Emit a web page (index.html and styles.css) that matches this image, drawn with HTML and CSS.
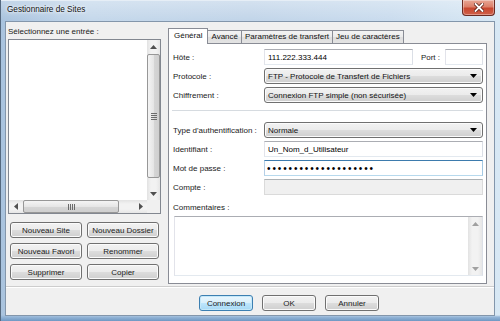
FILE: index.html
```html
<!DOCTYPE html>
<html lang="fr">
<head>
  <meta charset="UTF-8">
  <title>Gestionnaire de Sites</title>
  <link rel="stylesheet" href="styles.css">
</head>
<body>

<div class="window">

  <!-- TITLE BAR -->
  <div class="titlebar">
    <span class="title">Gestionnaire de Sites</span>
    <button class="close-btn" type="button" title="Fermer">
      <svg width="10" height="9" viewBox="0 0 10 9">
        <path d="M1.5 1 L8.5 8 M8.5 1 L1.5 8" stroke="#5a1d14" stroke-width="3.4" stroke-linecap="square"/>
        <path d="M1.5 1 L8.5 8 M8.5 1 L1.5 8" stroke="#fff" stroke-width="1.8" stroke-linecap="square"/>
      </svg>
    </button>
  </div>

  <div class="client">
    <div class="main">

      <!-- SITE LIST -->
      <div class="sites">
        <div class="lbl">Sélectionnez une entrée :</div>
        <div class="tree">
          <div class="tree-body"></div>
          <div class="vbar">
            <div class="sb-btn"><svg width="7" height="4" viewBox="0 0 7 4"><path d="M0 4 L3.5 0 L7 4Z"/></svg></div>
            <div class="sb-track">
              <div class="thumb-v">
                <svg width="6" height="7" viewBox="0 0 6 7"><path d="M0 0.5 H6 M0 2.5 H6 M0 4.5 H6 M0 6.5 H6" stroke="#6b6b6b" stroke-width="1"/></svg>
              </div>
            </div>
            <div class="sb-btn"><svg width="7" height="4" viewBox="0 0 7 4"><path d="M0 0 L3.5 4 L7 0Z"/></svg></div>
          </div>
          <div class="hbar">
            <div class="sb-btn"><svg width="4" height="7" viewBox="0 0 4 7"><path d="M4 0 L0 3.5 L4 7Z"/></svg></div>
            <div class="sb-track">
              <div class="thumb-h">
                <svg width="7" height="6" viewBox="0 0 7 6"><path d="M0.5 0 V6 M2.5 0 V6 M4.5 0 V6 M6.5 0 V6" stroke="#6b6b6b" stroke-width="1"/></svg>
              </div>
            </div>
            <div class="sb-btn"><svg width="4" height="7" viewBox="0 0 4 7"><path d="M0 0 L4 3.5 L0 7Z"/></svg></div>
          </div>
          <div class="sb-corner"></div>
        </div>
        <div class="site-btns">
          <button class="btn" type="button">Nouveau Site</button>
          <button class="btn" type="button">Nouveau Dossier</button>
          <button class="btn" type="button">Nouveau Favori</button>
          <button class="btn" type="button">Renommer</button>
          <button class="btn" type="button">Supprimer</button>
          <button class="btn" type="button">Copier</button>
        </div>
      </div>

      <!-- TABS -->
      <div class="tabs">
        <div class="tab-strip">
          <div class="tab active">Général</div>
          <div class="tab">Avancé</div>
          <div class="tab">Paramètres de transfert</div>
          <div class="tab">Jeu de caractères</div>
        </div>
        <div class="tab-panel">
          <div class="row">
            <label class="row-lbl" for="host">Hôte :</label>
            <input class="txt" id="host" type="text" value="111.222.333.444">
            <label class="port-lbl" for="port">Port :</label>
            <input class="txt port" id="port" type="text" value="">
          </div>
          <div class="row">
            <label class="row-lbl">Protocole :</label>
            <div class="combo">
              <select><option>FTP - Protocole de Transfert de Fichiers</option></select>
              <svg width="7" height="4" viewBox="0 0 7 4"><path d="M0 0 L3.5 4 L7 0Z"/></svg>
            </div>
          </div>
          <div class="row">
            <label class="row-lbl">Chiffrement :</label>
            <div class="combo">
              <select><option>Connexion FTP simple (non sécurisée)</option></select>
              <svg width="7" height="4" viewBox="0 0 7 4"><path d="M0 0 L3.5 4 L7 0Z"/></svg>
            </div>
          </div>

          <div class="hr"></div>

          <div class="row">
            <label class="row-lbl">Type d'authentification :</label>
            <div class="combo">
              <select><option>Normale</option></select>
              <svg width="7" height="4" viewBox="0 0 7 4"><path d="M0 0 L3.5 4 L7 0Z"/></svg>
            </div>
          </div>
          <div class="row">
            <label class="row-lbl" for="user">Identifiant :</label>
            <input class="txt" id="user" type="text" value="Un_Nom_d_Utilisateur">
          </div>
          <div class="row">
            <label class="row-lbl" for="pass">Mot de passe :</label>
            <input class="txt focus pass" id="pass" type="password" value="aaaaaaaaaaaaaaaaaaaa">
          </div>
          <div class="row">
            <label class="row-lbl" for="acct">Compte :</label>
            <input class="txt" id="acct" type="text" value="" disabled>
          </div>

          <div class="comments-lbl">Commentaires :</div>
          <div class="comments">
            <textarea></textarea>
            <div class="vbar flat">
              <div class="sb-btn"><svg width="7" height="4" viewBox="0 0 7 4"><path d="M0 4 L3.5 0 L7 4Z"/></svg></div>
              <div class="sb-track"></div>
              <div class="sb-btn"><svg width="7" height="4" viewBox="0 0 7 4"><path d="M0 0 L3.5 4 L7 0Z"/></svg></div>
            </div>
          </div>
        </div>
      </div>

    </div>

    <div class="sep"></div>

    <div class="footer">
      <button class="btn default" type="button">Connexion</button>
      <button class="btn" type="button">OK</button>
      <button class="btn" type="button">Annuler</button>
    </div>
  </div>
</div>

</body>
</html>
```

FILE: styles.css
```css
* { box-sizing: border-box; }
body { margin: 0; width: 500px; height: 321px; overflow: hidden; font-family: "Liberation Sans", Arial, sans-serif; font-size: 8px; color: #1a1a1a; background: #9fbddb; }

/* aero frame */
.window {
  width: 500px;
  height: 321px;
  padding: 0 5px 5px 5px;
  display: flex;
  flex-direction: column;
  background:
    linear-gradient(0deg, #6f98c3 0, #94b5d7 4px, rgba(148,181,215,0) 6px),
    linear-gradient(180deg, rgba(255,255,255,0.3) 0, rgba(255,255,255,0) 20px),
    linear-gradient(90deg, #a9c3de 0%, #c5d8eb 18%, #c2d5e9 50%, #cadcee 78%, #d8e8f4 100%);
  box-shadow: inset 1px 0 0 #55697f, inset 0 1px 0 #e6eef6;
}
.titlebar { height: 21px; display: flex; justify-content: space-between; align-items: flex-start; padding-left: 2px; }
.title { margin-top: 5px; font-size: 8.2px; line-height: 10px; color: #111; text-shadow: 0 0 5px #fff, 0 0 3px #fff; }
.close-btn {
  width: 33px;
  height: 16px;
  padding: 0;
  border: 1px solid #6b2b22;
  border-top: none;
  border-radius: 0 0 4px 4px;
  background: linear-gradient(#e8a795 0%, #dc806a 45%, #c8472f 55%, #d0614a 100%);
  box-shadow: inset 0 0 0 1px rgba(255,255,255,0.35);
  display: flex;
  align-items: center;
  justify-content: center;
}

.client { flex: 1; background: #f0f0f0; border: 1px solid #8396ab; display: flex; flex-direction: column; }
.main { height: 262px; display: flex; padding: 5px 7px 0 2px; gap: 7px; }

/* left column */
.sites { width: 153px; display: flex; flex-direction: column; }
.lbl { height: 10px; line-height: 10px; }
.tree {
  margin-top: 2px;
  height: 175px;
  border: 1px solid #828790;
  background: #fff;
  display: grid;
  grid-template-columns: 1fr 13px;
  grid-template-rows: 1fr 13px;
}
.vbar { display: flex; flex-direction: column; background: linear-gradient(90deg, #e2e2e2, #f2f2f2 30%, #f2f2f2 70%, #e6e6e6); }
.hbar { display: flex; background: linear-gradient(#e2e2e2, #f2f2f2 30%, #f2f2f2 70%, #e6e6e6); }
.sb-btn { flex: none; width: 13px; height: 13px; display: flex; align-items: center; justify-content: center; }
.sb-btn svg { fill: #505050; }
.sb-track { flex: 1; display: flex; }
.vbar .sb-track { flex-direction: column; }
.thumb-v {
  margin: 1px 0 0 0;
  height: 124px;
  border: 1px solid #979797;
  border-radius: 2px;
  background: linear-gradient(90deg, #f4f4f4, #e6e6e6 50%, #d6d6d6 51%, #cfcfcf);
  display: flex;
  align-items: center;
  justify-content: center;
}
.thumb-h {
  margin-left: 1px;
  width: 96px;
  border: 1px solid #979797;
  border-radius: 2px;
  background: linear-gradient(#f4f4f4, #e6e6e6 50%, #d6d6d6 51%, #cfcfcf);
  display: flex;
  align-items: center;
  justify-content: center;
}
.sb-corner { background: #f0f0f0; }

.site-btns { margin-top: 8px; padding: 0 2px; display: grid; grid-template-columns: 72px 72px; grid-auto-rows: 16px; gap: 5px; }

/* buttons */
.btn {
  height: 16px;
  padding: 0;
  font: inherit;
  font-weight: normal;
  color: #222;
  border: 1px solid #707070;
  border-radius: 3px;
  background: linear-gradient(#f2f2f2 0%, #ebebeb 49%, #dddddd 50%, #cfcfcf 100%);
  box-shadow: inset 0 0 0 1px #fbfbfb;
}
.btn.default {
  border-color: #3c7fb1;
  background: linear-gradient(#eaf6fd 0%, #d9f0fc 49%, #bee6fd 50%, #a7d9f5 100%);
  box-shadow: inset 0 0 0 1px #c4e8f9;
}

/* tabs */
.tabs { flex: 1; margin-top: 1px; display: flex; flex-direction: column; }
.tab-strip { height: 15px; display: flex; align-items: flex-end; padding-left: 0; }
.tab {
  height: 13px;
  line-height: 12px;
  padding: 0 3px;
  border: 1px solid #898c95;
  border-bottom: none;
  margin-right: -1px;
  background: linear-gradient(#f3f3f3, #ebebeb 50%, #dedede 51%, #e3e3e3);
  color: #111;
}
.tab.active {
  height: 16px;
  line-height: 14px;
  padding: 0 5px;
  margin-bottom: -1px;
  background: #fff;
  position: relative;
  z-index: 1;
}
.tab-panel { flex: 1; border: 1px solid #898c95; background: #fff; padding: 5px 3px 0 4px; display: flex; flex-direction: column; }

.row { height: 16px; display: flex; align-items: center; margin-top: 3px; }
.row:first-child { margin-top: 0; }
.row-lbl { width: 91px; flex: none; }
.port-lbl { margin: 0 5px 0 8px; }
.txt {
  flex: 1;
  min-width: 0;
  height: 16px;
  padding: 0 3px;
  font: inherit;
  font-weight: normal;
  color: #000;
  background: #fff;
  border: 1px solid;
  border-color: #abadb3 #dbdfe6 #e3e9ef #e2e3ea;
  outline: none;
}
.txt.port { flex: none; width: 38px; }
.txt.focus { border-color: #3d7bad #a4c9e3 #b7d9ed #b5cfe7; }
.txt.pass { font-size: 10px; letter-spacing: 1.9px; padding-left: 2px; }
.txt:disabled { background: #f0f0f0; border-color: #adb2b5 #dadada #dadada #dadada; }

.combo {
  flex: 1;
  height: 16px;
  display: flex;
  align-items: center;
  border: 1px solid #707070;
  border-radius: 3px;
  background: linear-gradient(#f2f2f2 0%, #ebebeb 49%, #dddddd 50%, #cfcfcf 100%);
  box-shadow: inset 0 0 0 1px #fbfbfb;
}
.combo select {
  flex: 1;
  height: 100%;
  appearance: none;
  border: none;
  background: transparent;
  font: inherit;
  font-weight: normal;
  color: #111;
  padding: 0 0 0 3px;
  outline: none;
}
.combo svg { margin-right: 5px; fill: #000; }

.hr { height: 1px; margin: 7px 0 8px -1px; background: #d6dbe0; }

.comments-lbl { margin-top: 8px; height: 10px; line-height: 10px; }
.comments { margin: 3px 0 0 1px; height: 60px; display: flex; border: 1px solid; border-color: #abadb3 #dbdfe6 #e3e9ef #e2e3ea; }
.comments textarea { flex: 1; border: none; resize: none; outline: none; font: inherit; }
.vbar.flat { width: 14px; }
.vbar.flat .sb-btn { width: 14px; }
.vbar.flat .sb-btn svg { fill: #a0a0a0; }

/* bottom */
.sep { margin-top: 2px; height: 2px; border-top: 1px solid #cdcdcd; border-bottom: 1px solid #fff; }
.footer { display: flex; gap: 9px; padding: 7px 0 0 193px; }
.footer .btn { width: 54px; }
```
